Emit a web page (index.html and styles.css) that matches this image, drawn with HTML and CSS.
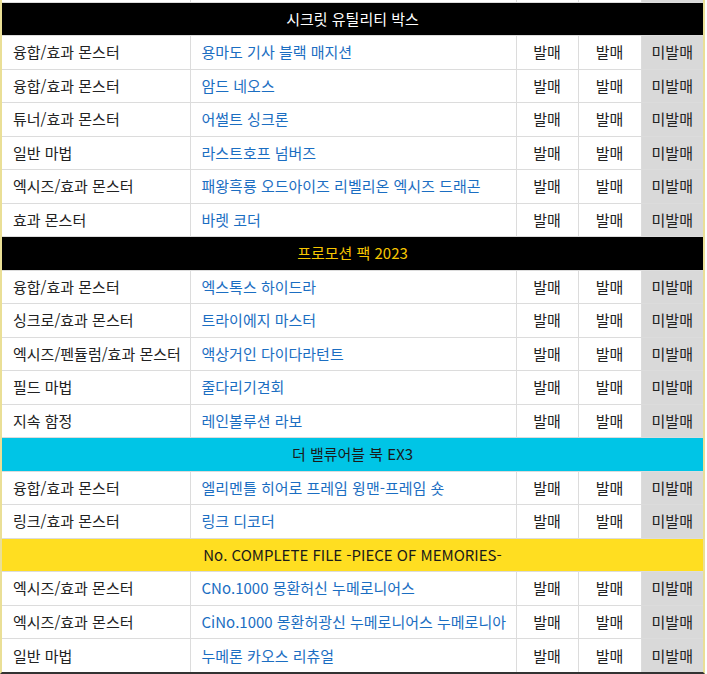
FILE: index.html
```html
<!DOCTYPE html>
<html lang="ko">
<head>
<meta charset="utf-8">
<link rel="stylesheet" href="styles.css">
</head>
<body>
<div class="frame">
<table class="cards">
<colgroup>
<col class="c-type"><col class="c-name"><col class="c-s"><col class="c-s2"><col class="c-s">
</colgroup>
<tbody>
<tr class="stub"><td></td><td></td><td></td><td></td><td class="gray"></td></tr>
<tr class="sec sec-black"><td colspan="5">시크릿 유틸리티 박스</td></tr>
<tr><td>융합/효과 몬스터</td><td class="name">용마도 기사 블랙 매지션</td><td class="st">발매</td><td class="st">발매</td><td class="st gray">미발매</td></tr>
<tr><td>융합/효과 몬스터</td><td class="name">암드 네오스</td><td class="st">발매</td><td class="st">발매</td><td class="st gray">미발매</td></tr>
<tr><td>튜너/효과 몬스터</td><td class="name">어썰트 싱크론</td><td class="st">발매</td><td class="st">발매</td><td class="st gray">미발매</td></tr>
<tr><td>일반 마법</td><td class="name">라스트호프 넘버즈</td><td class="st">발매</td><td class="st">발매</td><td class="st gray">미발매</td></tr>
<tr><td>엑시즈/효과 몬스터</td><td class="name">패왕흑룡 오드아이즈 리벨리온 엑시즈 드래곤</td><td class="st">발매</td><td class="st">발매</td><td class="st gray">미발매</td></tr>
<tr><td>효과 몬스터</td><td class="name">바렛 코더</td><td class="st">발매</td><td class="st">발매</td><td class="st gray">미발매</td></tr>
<tr class="sec sec-gold"><td colspan="5">프로모션 팩 2023</td></tr>
<tr><td>융합/효과 몬스터</td><td class="name">엑스톡스 하이드라</td><td class="st">발매</td><td class="st">발매</td><td class="st gray">미발매</td></tr>
<tr><td>싱크로/효과 몬스터</td><td class="name">트라이에지 마스터</td><td class="st">발매</td><td class="st">발매</td><td class="st gray">미발매</td></tr>
<tr><td>엑시즈/펜듈럼/효과 몬스터</td><td class="name">액상거인 다이다라턴트</td><td class="st">발매</td><td class="st">발매</td><td class="st gray">미발매</td></tr>
<tr><td>필드 마법</td><td class="name">줄다리기견회</td><td class="st">발매</td><td class="st">발매</td><td class="st gray">미발매</td></tr>
<tr><td>지속 함정</td><td class="name">레인볼루션 라보</td><td class="st">발매</td><td class="st">발매</td><td class="st gray">미발매</td></tr>
<tr class="sec sec-cyan"><td colspan="5">더 밸류어블 북 EX3</td></tr>
<tr><td>융합/효과 몬스터</td><td class="name">엘리멘틀 히어로 프레임 윙맨-프레임 숏</td><td class="st">발매</td><td class="st">발매</td><td class="st gray">미발매</td></tr>
<tr><td>링크/효과 몬스터</td><td class="name">링크 디코더</td><td class="st">발매</td><td class="st">발매</td><td class="st gray">미발매</td></tr>
<tr class="sec sec-yellow"><td colspan="5">No. COMPLETE FILE -PIECE OF MEMORIES-</td></tr>
<tr><td>엑시즈/효과 몬스터</td><td class="name">CNo.1000 몽환허신 누메로니어스</td><td class="st">발매</td><td class="st">발매</td><td class="st gray">미발매</td></tr>
<tr><td>엑시즈/효과 몬스터</td><td class="name">CiNo.1000 몽환허광신 누메로니어스 누메로니아</td><td class="st">발매</td><td class="st">발매</td><td class="st gray">미발매</td></tr>
<tr><td>일반 마법</td><td class="name">누메론 카오스 리츄얼</td><td class="st">발매</td><td class="st">발매</td><td class="st gray">미발매</td></tr>
</tbody>
</table>
</div>
</body>
</html>
```

FILE: styles.css
```css
html, body {
  margin: 0;
  padding: 0;
  background: #ffffff;
}
body {
  font-family: "Noto Sans CJK KR", "Noto Sans", sans-serif;
  font-size: 15px;
  color: #222222;
}
.frame {
  width: 701px;
  border-left: 2px solid #eadf96;
  border-right: 2px solid #eadf96;
  border-bottom: 2px solid #333333;
}
.cards {
  width: 701px;
  table-layout: fixed;
  border-collapse: collapse;
}
.c-type { width: 188px; }
.c-name { width: 326px; }
.c-s { width: 62px; }
.c-s2 { width: 63px; }
.cards td {
  height: 33.5px;
  padding: 0 0 0 11px;
  border: 1px solid #dcdcdc;
  white-space: nowrap;
  overflow: hidden;
  line-height: 20px;
  box-sizing: border-box;
}
.cards tr:last-child td { border-bottom: none; }
.cards td:first-child { border-left: none; }
.cards td:last-child { border-right: none; }
.cards .stub td {
  height: 2px;
  padding: 0;
  border-top: none;
}
.cards .name { color: #1b6ec2; }
.cards .st {
  text-align: center;
  padding: 0;
}
.cards .gray { background: #d9d9d9; }
.cards .sec td {
  text-align: center;
  padding: 0;
  border-left: none;
  border-right: none;
}
.sec-black td { background: #000000; color: #ffffff; }
.sec-gold td { background: #000000; color: #f7c600; }
.sec-cyan td { background: #00c5e6; color: #1a1a1a; }
.sec-yellow td { background: #ffde21; color: #1a1a1a; }
```
